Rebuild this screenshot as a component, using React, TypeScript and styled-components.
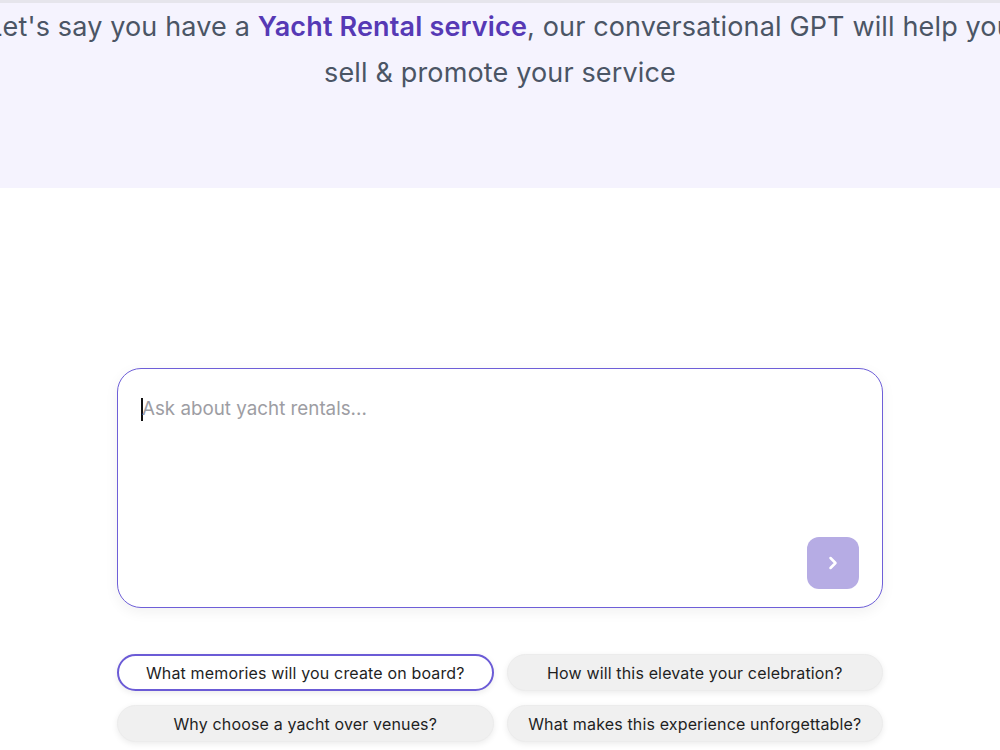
import React from "react";
import styled, { createGlobalStyle } from "styled-components";

const GlobalStyle = createGlobalStyle`
  html, body {
    margin: 0;
    padding: 0;
    background: #ffffff;
    overflow-x: hidden;
  }
  body {
    font-family: Inter, "Noto Sans", sans-serif;
  }
`;

const Page = styled.div`
  display: flex;
  flex-direction: column;
  width: 1000px;
  min-height: 750px;
  overflow: hidden;
`;

const Hero = styled.section`
  height: 185px;
  background: #f5f3fe;
  border-top: 3px solid #e6e5ec;
  overflow: hidden;
  display: flex;
  justify-content: center;
`;

const Lead = styled.p`
  flex: 0 0 1040px;
  margin: 1px 0 0;
  text-align: center;
  font-size: 27px;
  letter-spacing: 0.15px;
  line-height: 46px;
  color: #4b5565;
  font-weight: 400;
`;

const Highlight = styled.strong`
  color: #5639b5;
  font-weight: 600;
`;

const Main = styled.main`
  display: flex;
  flex-direction: column;
  align-items: center;
  padding-top: 180px;
`;

const ChatBox = styled.div`
  box-sizing: border-box;
  width: 766px;
  height: 240px;
  border: 1px solid #6e5fd8;
  border-radius: 24px;
  background: #fff;
  box-shadow: 0 4px 14px rgba(0, 0, 0, 0.06);
  display: flex;
  flex-direction: column;
  padding: 26px 23px 18px 23px;
`;

const InputRow = styled.div`
  flex: 1;
  display: flex;
  align-items: flex-start;
`;

const Caret = styled.span`
  width: 2px;
  height: 23px;
  margin-top: 3px;
  background: #111;
  flex: 0 0 auto;
`;

const Input = styled.textarea`
  flex: 1;
  height: 100%;
  border: none;
  outline: none;
  resize: none;
  background: transparent;
  font-family: Inter, "Noto Sans", sans-serif;
  font-size: 18.8px;
  line-height: 28px;
  color: #222;
  padding: 0;
  margin-left: -1px;
  caret-color: transparent;

  &::placeholder {
    color: #9d9da3;
  }
`;

const Footer = styled.div`
  display: flex;
  justify-content: flex-end;
`;

const SendButton = styled.button`
  width: 52px;
  height: 52px;
  border: none;
  border-radius: 12px;
  background: #b6ace4;
  display: flex;
  align-items: center;
  justify-content: center;
  cursor: pointer;
  padding: 0;
`;

const Chips = styled.div`
  width: 766px;
  display: grid;
  grid-template-columns: 1fr 1fr;
  column-gap: 13px;
  row-gap: 14px;
  margin-top: 46px;
`;

const Chip = styled.button<{ $active?: boolean }>`
  box-sizing: border-box;
  height: 37px;
  border-radius: 999px;
  border: ${(p) => (p.$active ? "2px solid #6b5bd6" : "1px solid #ececec")};
  background: ${(p) => (p.$active ? "#ffffff" : "#f0f0f0")};
  box-shadow: 0 2px 6px rgba(0, 0, 0, 0.08);
  font-family: Inter, "Noto Sans", sans-serif;
  font-size: 16px;
  letter-spacing: 0.15px;
  color: #1f1f1f;
  cursor: pointer;
`;

const questions = [
  "What memories will you create on board?",
  "How will this elevate your celebration?",
  "Why choose a yacht over venues?",
  "What makes this experience unforgettable?",
];

export default function App() {
  return (
    <Page>
      <GlobalStyle />
      <Hero>
        <Lead>
          Let's say you have a <Highlight>Yacht Rental service</Highlight>, our
          conversational GPT will help you sell &amp; promote your service
        </Lead>
      </Hero>
      <Main>
        <ChatBox>
          <InputRow>
            <Caret />
            <Input placeholder="Ask about yacht rentals..." />
          </InputRow>
          <Footer>
            <SendButton aria-label="Send">
              <svg width="20" height="20" viewBox="0 0 24 24" fill="none">
                <path
                  d="M9 6l6 6-6 6"
                  stroke="#fff"
                  strokeWidth="3"
                  strokeLinecap="round"
                  strokeLinejoin="round"
                />
              </svg>
            </SendButton>
          </Footer>
        </ChatBox>
        <Chips>
          {questions.map((q, i) => (
            <Chip key={q} $active={i === 0}>
              {q}
            </Chip>
          ))}
        </Chips>
      </Main>
    </Page>
  );
}
